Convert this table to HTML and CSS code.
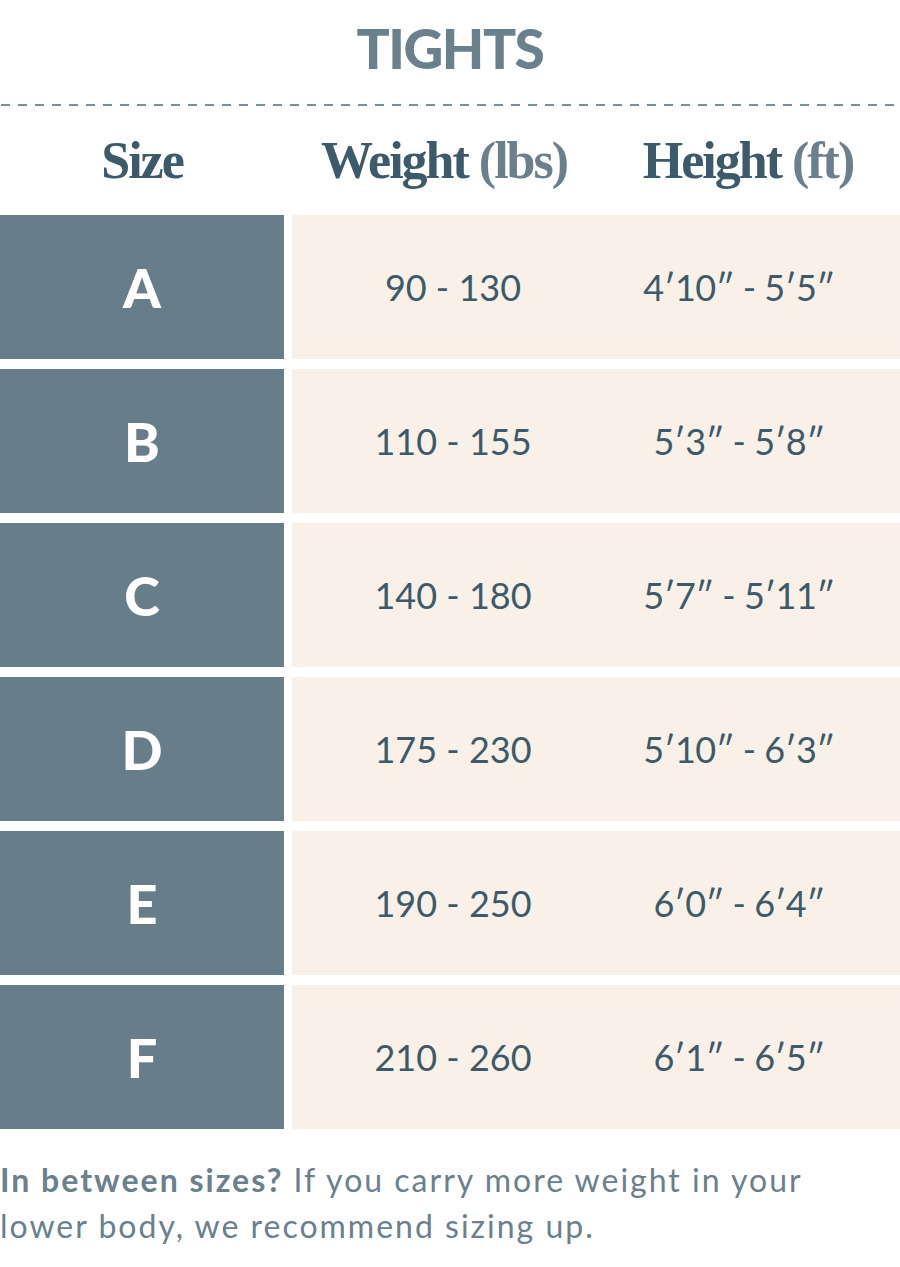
FILE: index.html
```html
<!DOCTYPE html>
<html lang="en">
<head>
<meta charset="utf-8">
<title>Tights size chart</title>
<link rel="stylesheet" href="styles.css">
</head>
<body>
<div class="chart">
  <h1 class="title">TIGHTS</h1>
  <div class="rule"></div>
  <div class="head">
    <div class="h-size">Size</div>
    <div class="h-cols">
      <div class="h-col">Weight <span class="unit">(lbs)</span></div>
      <div class="h-col">Height <span class="unit">(ft)</span></div>
    </div>
  </div>
  <div class="rows">
    <div class="row"><div class="size">A</div><div class="vals"><div class="w">90 - 130</div><div class="h">4′10″ - 5′5″</div></div></div>
    <div class="row"><div class="size">B</div><div class="vals"><div class="w">110 - 155</div><div class="h">5′3″ - 5′8″</div></div></div>
    <div class="row"><div class="size">C</div><div class="vals"><div class="w">140 - 180</div><div class="h">5′7″ - 5′11″</div></div></div>
    <div class="row"><div class="size">D</div><div class="vals"><div class="w">175 - 230</div><div class="h">5′10″ - 6′3″</div></div></div>
    <div class="row"><div class="size">E</div><div class="vals"><div class="w">190 - 250</div><div class="h">6′0″ - 6′4″</div></div></div>
    <div class="row"><div class="size">F</div><div class="vals"><div class="w">210 - 260</div><div class="h">6′1″ - 6′5″</div></div></div>
  </div>
  <p class="note"><strong>In between sizes?</strong> If you carry more weight in your lower body, we recommend sizing up.</p>
</div>
</body>
</html>
```

FILE: styles.css
```css
html, body {
  margin: 0;
  padding: 0;
  background: #ffffff;
}

.chart {
  width: 900px;
  font-family: "Lato", "Liberation Sans", sans-serif;
}

.title {
  margin: 0;
  height: 96px;
  display: flex;
  align-items: center;
  justify-content: center;
  font-size: 55px;
  font-weight: 900;
  color: #6a808c;
  letter-spacing: -1.5px;
  line-height: 1;
}

.rule {
  margin-top: 8px;
  height: 2px;
  margin-left: 1px;
  background: repeating-linear-gradient(to right, #7b8f9a 0, #7b8f9a 9px, transparent 9px, transparent 17px);
}

.head {
  display: grid;
  grid-template-columns: 284px 1fr;
  column-gap: 8px;
  height: 109px;
  align-items: center;
  font-family: "Liberation Serif", "Times New Roman", serif;
  font-weight: 700;
  font-size: 52px;
  letter-spacing: -2px;
  color: #3d5a6b;
}

.h-size {
  text-align: center;
}

.h-cols {
  display: grid;
  grid-template-columns: 1fr 1fr;
}

.h-col {
  text-align: center;
}

.unit {
  color: #6a808c;
}

.rows {
  display: flex;
  flex-direction: column;
  gap: 10px;
}

.row {
  display: grid;
  grid-template-columns: 284px 1fr;
  column-gap: 8px;
  height: 144px;
}

.size {
  background: #677d8a;
  color: #ffffff;
  display: flex;
  align-items: center;
  justify-content: center;
  font-size: 54px;
  font-weight: 900;
}

.vals {
  background: #f9f1e8;
  display: grid;
  grid-template-columns: 1fr 1fr;
  align-items: center;
  color: #3d5a6b;
  font-size: 36px;
  font-weight: 400;
}

.w {
  text-align: center;
  padding-left: 18px;
}

.h {
  text-align: center;
  padding-right: 18px;
  letter-spacing: -0.5px;
}

.note {
  margin: 28px 0 0 0;
  max-width: 840px;
  font-size: 32px;
  line-height: 46px;
  letter-spacing: 2px;
  color: #6a808c;
}

.note strong {
  font-weight: 700;
}
```
